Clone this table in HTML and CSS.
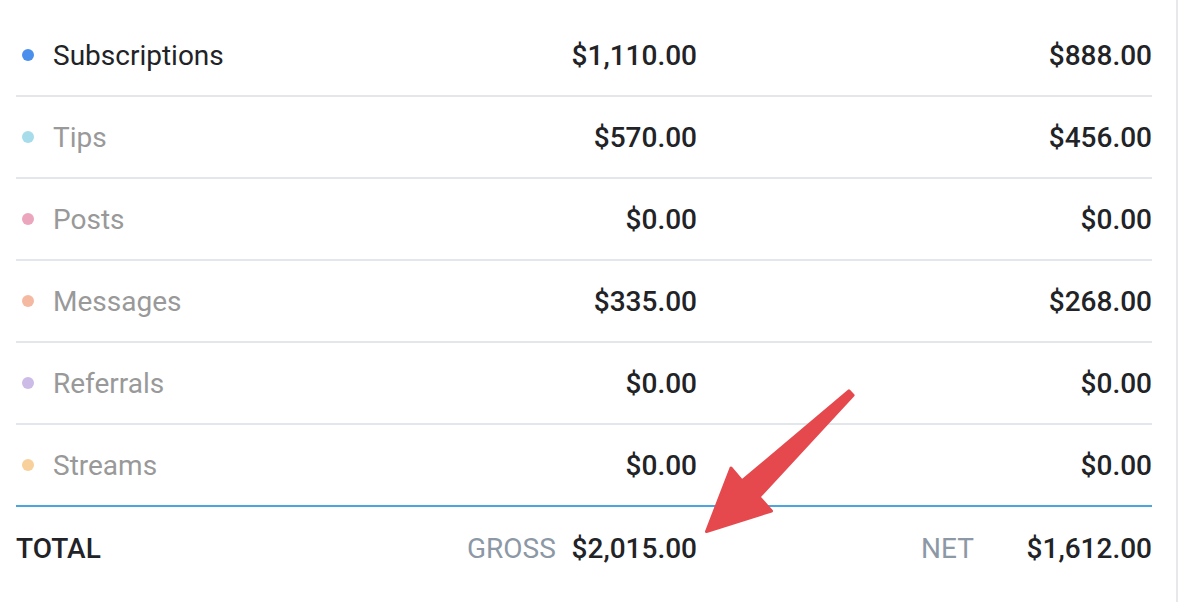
FILE: index.html
```html
<!DOCTYPE html>
<html lang="en">
<head>
<meta charset="utf-8">
<title>Earnings</title>
<link rel="stylesheet" href="styles.css">
</head>
<body>
<div class="panel">
  <div class="row">
    <div class="label"><span class="dot dot-subs"></span><span class="name name-active">Subscriptions</span></div>
    <div class="val">$1,110.00</div>
    <div class="val val-net">$888.00</div>
  </div>
  <div class="row">
    <div class="label"><span class="dot dot-tips"></span><span class="name">Tips</span></div>
    <div class="val">$570.00</div>
    <div class="val val-net">$456.00</div>
  </div>
  <div class="row">
    <div class="label"><span class="dot dot-posts"></span><span class="name">Posts</span></div>
    <div class="val">$0.00</div>
    <div class="val val-net">$0.00</div>
  </div>
  <div class="row">
    <div class="label"><span class="dot dot-messages"></span><span class="name">Messages</span></div>
    <div class="val">$335.00</div>
    <div class="val val-net">$268.00</div>
  </div>
  <div class="row">
    <div class="label"><span class="dot dot-referrals"></span><span class="name">Referrals</span></div>
    <div class="val">$0.00</div>
    <div class="val val-net">$0.00</div>
  </div>
  <div class="row row-last">
    <div class="label"><span class="dot dot-streams"></span><span class="name">Streams</span></div>
    <div class="val">$0.00</div>
    <div class="val val-net">$0.00</div>
  </div>
  <div class="row row-total">
    <div class="label total-label">TOTAL</div>
    <div class="val val-split"><span class="cap">GROSS</span><span>$2,015.00</span></div>
    <div class="val val-net val-split"><span class="cap">NET</span><span>$1,612.00</span></div>
  </div>
</div>
<svg class="annotation" width="1182" height="602" viewBox="0 0 1182 602" xmlns="http://www.w3.org/2000/svg">
  <path d="M848.9,390.8 L742,481 L731,468 L706.5,531.5 L771.5,511 L759,497 L853.1,395.2 Z" fill="#e5494d" stroke="#e5494d" stroke-width="3" stroke-linejoin="round"/>
</svg>
</body>
</html>
```

FILE: styles.css
```css
* { box-sizing: border-box; }

html, body {
  margin: 0;
  padding: 0;
  background: #ffffff;
}

body {
  font-family: Roboto, "Liberation Sans", Arial, sans-serif;
  font-size: 28px;
  color: #222327;
  position: relative;
  width: 1182px;
  height: 602px;
  overflow: hidden;
}

.panel {
  width: 1178px;
  height: 602px;
  padding: 15px 24px 0 16px;
  border-right: 2px solid #e6e8ec;
}

.row {
  display: grid;
  grid-template-columns: 451px 230px 455px;
  align-items: center;
  height: 82px;
  border-bottom: 2px solid #e3e6ea;
}

.row-last {
  border-bottom-color: #4aa5e0;
}

.row-total {
  border-bottom: none;
}

.label {
  display: flex;
  align-items: center;
}

.dot {
  width: 12px;
  height: 12px;
  border-radius: 50%;
  margin-left: 6px;
  margin-right: 19px;
  flex: none;
}

.dot-subs { background: #4b8fed; }
.dot-tips { background: #a7dcea; }
.dot-posts { background: #eba6be; }
.dot-messages { background: #f5b9a2; }
.dot-referrals { background: #cbbbe6; }
.dot-streams { background: #f8d09c; }

.name {
  color: #999999;
}

.name-active {
  color: #222327;
}

.val {
  display: flex;
  justify-content: flex-end;
  font-weight: 500;
}

.val-split {
  justify-content: space-between;
}

.val-net.val-split {
  padding-left: 224px;
}

.cap {
  font-weight: 400;
  color: #8c98a5;
}

.total-label {
  font-weight: 500;
}

.annotation {
  position: absolute;
  left: 0;
  top: 0;
  pointer-events: none;
}
```
